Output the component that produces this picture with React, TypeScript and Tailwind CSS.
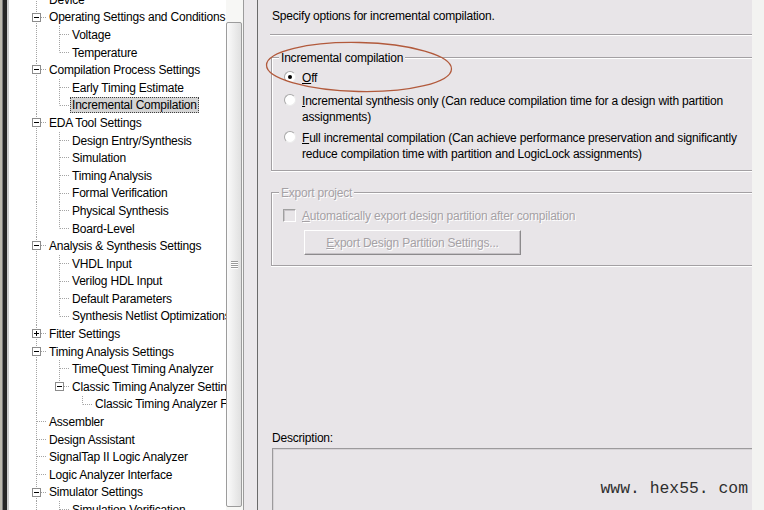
import React from "react";

type Cell = "v" | " " | "t" | "l" | "m" | "p" | "mL";

const rows: { label: string; cells: Cell[]; selected?: boolean }[] = [
  { label: "Device", cells: ["t"] },
  { label: "Operating Settings and Conditions", cells: ["m"] },
  { label: "Voltage", cells: ["v", "t"] },
  { label: "Temperature", cells: ["v", "l"] },
  { label: "Compilation Process Settings", cells: ["m"] },
  { label: "Early Timing Estimate", cells: ["v", "t"] },
  { label: "Incremental Compilation", cells: ["v", "l"], selected: true },
  { label: "EDA Tool Settings", cells: ["m"] },
  { label: "Design Entry/Synthesis", cells: ["v", "t"] },
  { label: "Simulation", cells: ["v", "t"] },
  { label: "Timing Analysis", cells: ["v", "t"] },
  { label: "Formal Verification", cells: ["v", "t"] },
  { label: "Physical Synthesis", cells: ["v", "t"] },
  { label: "Board-Level", cells: ["v", "l"] },
  { label: "Analysis & Synthesis Settings", cells: ["m"] },
  { label: "VHDL Input", cells: ["v", "t"] },
  { label: "Verilog HDL Input", cells: ["v", "t"] },
  { label: "Default Parameters", cells: ["v", "t"] },
  { label: "Synthesis Netlist Optimizations", cells: ["v", "l"] },
  { label: "Fitter Settings", cells: ["p"] },
  { label: "Timing Analysis Settings", cells: ["m"] },
  { label: "TimeQuest Timing Analyzer", cells: ["v", "t"] },
  { label: "Classic Timing Analyzer Settings", cells: ["v", "mL"] },
  { label: "Classic Timing Analyzer Fmax", cells: ["v", " ", "l"] },
  { label: "Assembler", cells: ["t"] },
  { label: "Design Assistant", cells: ["t"] },
  { label: "SignalTap II Logic Analyzer", cells: ["t"] },
  { label: "Logic Analyzer Interface", cells: ["t"] },
  { label: "Simulator Settings", cells: ["m"] },
  { label: "Simulation Verification", cells: ["v", "t"] },
];

const DOT = "#a4a4a4";

// one 23px column of the tree's dotted connectors
function TreeCell({ kind }: { kind: Cell }) {
  const mid = 8.5;
  const box = kind === "m" || kind === "p" || kind === "mL";
  return (
    <svg width={23} height={17.6} className="block shrink-0">
      {(kind === "v" || kind === "t" || kind === "m" || kind === "p") && (
        <line x1={11.5} y1={0} x2={11.5} y2={17.6} stroke={DOT} strokeDasharray="1 1" />
      )}
      {(kind === "l" || kind === "mL") && (
        <line x1={11.5} y1={0} x2={11.5} y2={mid} stroke={DOT} strokeDasharray="1 1" />
      )}
      {(kind === "t" || kind === "l") && (
        <line x1={12} y1={mid} x2={22} y2={mid} stroke={DOT} strokeDasharray="1 1" />
      )}
      {box && (
        <>
          <line x1={16} y1={mid} x2={22} y2={mid} stroke={DOT} strokeDasharray="1 1" />
          <rect x={7.5} y={4.5} width={8} height={8} fill="#fff" stroke="#8c8c8c" />
          <line x1={9} y1={mid} x2={14} y2={mid} stroke="#000" />
          {kind === "p" && <line x1={11.5} y1={6} x2={11.5} y2={11} stroke="#000" />}
        </>
      )}
    </svg>
  );
}

function Radio({ checked, children, className }: { checked?: boolean; children: React.ReactNode; className: string }) {
  return (
    <div className={`ml-[12px] flex items-start gap-[6px] leading-[16px] whitespace-nowrap ${className}`}>
      <span className="mt-[2px] flex h-[12px] w-[12px] shrink-0 items-center justify-center rounded-full border border-t-[#a8a8a8] border-l-[#a8a8a8] border-b-[#ececec] border-r-[#ececec] bg-white">
        {checked && <span className="h-[4px] w-[4px] rounded-full bg-black" />}
      </span>
      <span className="pt-px">{children}</span>
    </div>
  );
}

export default function App() {
  return (
    <div className="flex h-[510px] w-[764px] overflow-hidden font-['Liberation_Sans',Arial,sans-serif] text-[12px] tracking-[-0.2px] text-black">
      {/* window frame edge */}
      <div className="w-[2px] bg-[#bcb9ae]" />
      <div className="w-px bg-[#7a7a7a]" />
      <div className="w-[4px] bg-[#262626]" />
      <div className="w-[2px] bg-[#cfcfcf]" />

      {/* tree */}
      <div className="w-[217px] overflow-hidden bg-white">
        <div className="-mt-[9px]">
          {rows.map((r) => (
            <div key={r.label} className="flex h-[17.6px] items-center whitespace-nowrap pl-[16px]">
              {r.cells.map((c, i) => (
                <TreeCell key={i} kind={c} />
              ))}
              <span
                className={`-ml-px px-[2px] leading-[16px] ${
                  r.selected ? "bg-[#d4d4d4] outline-1 -outline-offset-1 outline-dotted outline-[#404040]" : ""
                }`}
              >
                {r.label}
              </span>
            </div>
          ))}
        </div>
      </div>

      {/* scrollbar */}
      <div className="flex w-[17px] flex-col bg-[#f7f7f5]">
        <div className="h-[22px]" />
        <div className="flex h-[485px] w-[16px] flex-col items-center justify-center gap-[1px] rounded-[2px] border border-[#9c9c9c] bg-linear-to-r from-[#fbfbfb] to-[#e0e0e0]">
          {[0, 1, 2, 3].map((i) => (
            <div key={i} className="h-px w-[7px] bg-[#9a9a9a] shadow-[0_1px_0_#fff]" />
          ))}
        </div>
      </div>
      <div className="w-px bg-[#9c9c9c]" />
      <div className="w-[13px] bg-[#ebe8eb]" />
      <div className="w-px bg-[#6a6a6a]" />

      {/* settings page */}
      <div className="relative flex w-[494px] flex-col bg-[#e8e5e8]">
        <p className="ml-[14px] mt-[9px] leading-[14px]">Specify options for incremental compilation.</p>
        <div className="ml-[12px] mt-[11px] h-[2px] border-t border-b border-t-[#a3a0a3] border-b-white" />

        <div className="ml-[13px] mt-[21px] border-y border-l border-[#a3a0a3] pb-[8px] shadow-[inset_1px_1px_0_#fff,0_1px_0_#fff]">
          <div className="-mt-[7px] ml-[7px] w-fit bg-[#e8e5e8] px-[2px] leading-[14px]">Incremental compilation</div>
          <Radio checked className="mt-[4px]">
            <u>O</u>ff
          </Radio>
          <Radio className="mt-[6px]">
            <u>I</u>ncremental synthesis only (Can reduce compilation time for a design with partition
            <br />
            assignments)
          </Radio>
          <Radio className="mt-[4px]">
            <u>F</u>ull incremental compilation (Can achieve performance preservation and significantly
            <br />
            reduce compilation time with partition and LogicLock assignments)
          </Radio>
        </div>

        <div className="ml-[13px] mt-[21px] border-y border-l border-[#a3a0a3] pb-[10px] text-[#a5a1a5] shadow-[inset_1px_1px_0_#fff,0_1px_0_#fff] [text-shadow:1px_1px_0_#ffffff]">
          <div className="-mt-[7px] ml-[7px] w-fit bg-[#e8e5e8] px-[2px] leading-[14px]">Export project</div>
          <div className="ml-[11px] mt-[7px] flex items-start gap-[6px] leading-[16px]">
            <span className="mt-[2px] h-[13px] w-[13px] shrink-0 border border-t-[#a0a0a0] border-l-[#a0a0a0] border-b-white border-r-white bg-[#e8e5e8] shadow-[inset_1px_1px_0_#c8c4c8]" />
            <span className="pt-px">
              <u>A</u>utomatically export design partition after compilation
            </span>
          </div>
          <div className="ml-[32px] mt-[6px] flex h-[25px] w-[217px] items-center justify-center border border-t-white border-l-white border-b-[#8c8a8c] border-r-[#8c8a8c] shadow-[inset_-1px_-1px_0_#c6c2c6]">
            <u>E</u>xport Design Partition Settings...
          </div>
        </div>

        <p className="ml-[14px] mt-[165px] leading-[14px]">Description:</p>
        <div className="ml-[14px] mt-[3px] h-[80px] shrink-0 border-t border-l border-[#9c9a9c] shadow-[inset_1px_1px_0_#d6d3d6]" />

        {/* annotation ellipse drawn over the page */}
        <svg width={196} height={58} className="pointer-events-none absolute left-[6px] top-[39px]">
          <ellipse cx={95} cy={28} rx={92.5} ry={24.5} fill="none" stroke="#b25a3c" strokeWidth={1.3} transform="rotate(1.2 95 28)" />
        </svg>

        {/* watermark */}
        <div className="pointer-events-none absolute right-[4px] top-[479px] font-['Liberation_Mono',monospace] text-[16.4px] leading-[20px] tracking-normal text-[#2e2e2e]">
          www. hex55. com
        </div>
      </div>

      <div className="w-[12px] bg-[#f3f3f1]" />
    </div>
  );
}
